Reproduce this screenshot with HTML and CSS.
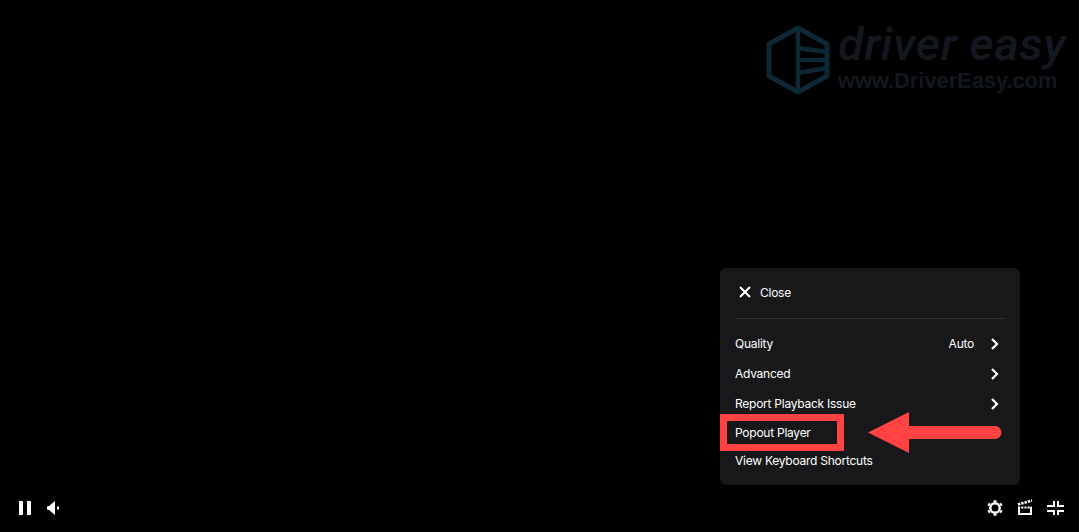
FILE: index.html
```html
<!DOCTYPE html>
<html lang="en">

<head>
    <meta charset="UTF-8">
    <title>Player</title>
    <link rel="stylesheet" href="styles.css">
</head>

<body>
    <div class="player">
        <div class="watermark">
            <svg class="watermark-logo" width="64" height="70" viewBox="0 0 64 70">
                <path d="M32 3 L61 19 V51 L32 67 L3 51 V19 Z" fill="none" stroke="#0d2735" stroke-width="5" stroke-linejoin="round" />
                <path d="M32 3 V67 M32 23 L61 27 M32 35 H61 M32 48 L61 43" fill="none" stroke="#0d2735" stroke-width="4.5" />
            </svg>
            <div class="watermark-text">
                <div class="watermark-name">driver easy</div>
                <div class="watermark-url">www.DriverEasy.com</div>
            </div>
        </div>

        <div class="menu">
            <div class="menu-close">
                <svg width="14" height="14" viewBox="0 0 14 14">
                    <path d="M2 2 L12 12 M12 2 L2 12" stroke="#fff" stroke-width="2" fill="none" />
                </svg>
                <span>Close</span>
            </div>
            <div class="menu-rows">
                <div class="menu-row">
                    <span class="menu-label">Quality</span>
                    <span class="menu-value">Auto</span>
                    <svg class="chevron" width="10" height="14" viewBox="0 0 10 14">
                        <path d="M2 2 L7 7 L2 12" stroke="#fff" stroke-width="2.2" fill="none" />
                    </svg>
                </div>
                <div class="menu-row">
                    <span class="menu-label">Advanced</span>
                    <svg class="chevron" width="10" height="14" viewBox="0 0 10 14">
                        <path d="M2 2 L7 7 L2 12" stroke="#fff" stroke-width="2.2" fill="none" />
                    </svg>
                </div>
                <div class="menu-row">
                    <span class="menu-label">Report Playback Issue</span>
                    <svg class="chevron" width="10" height="14" viewBox="0 0 10 14">
                        <path d="M2 2 L7 7 L2 12" stroke="#fff" stroke-width="2.2" fill="none" />
                    </svg>
                </div>
                <div class="menu-row">
                    <span class="menu-label">Popout Player</span>
                </div>
                <div class="menu-row">
                    <span class="menu-label">View Keyboard Shortcuts</span>
                </div>
            </div>
        </div>

        <div class="callout-box"></div>
        <svg class="callout-arrow" width="136" height="42" viewBox="0 0 136 42">
            <path d="M1 20.5 L42 0 V14 H128 A6.5 6.5 0 0 1 128 27 H42 V41 Z" fill="#ff4242" />
        </svg>
    </div>

    <div class="controls">
        <div class="controls-group">
            <svg width="20" height="20" viewBox="0 0 20 20">
                <path d="M5 4 H9 V18 H5 Z M13 4 H17 V18 H13 Z" fill="#fff" />
            </svg>
            <svg width="20" height="20" viewBox="0 0 20 20">
                <path d="M3 9.5 L5 9 L11 4 V18 L5 13 L3 12.5 Z M13 9.5 H15 V12.5 H13 Z" fill="#fff" />
            </svg>
        </div>
        <div class="controls-group">
            <svg width="20" height="20" viewBox="0 0 20 20">
                <circle cx="10" cy="11" r="4.7" fill="none" stroke="#fff" stroke-width="2.4" />
                <path d="M10 3.2 V5 M10 17 V18.8 M3.2 7 L4.8 8 M15.2 14 L16.8 15 M3.2 15 L4.8 14 M15.2 8 L16.8 7" stroke="#fff" stroke-width="3" />
            </svg>
            <svg width="20" height="20" viewBox="0 0 20 20">
                <path d="M4 10 V17 H16 V10" fill="none" stroke="#fff" stroke-width="2" />
                <path d="M3 7.5 L17 3.5" stroke="#fff" stroke-width="2.6" stroke-dasharray="2.4 1" />
                <path d="M3 10.5 H17" stroke="#fff" stroke-width="2" stroke-dasharray="2.2 1" />
            </svg>
            <svg width="20" height="20" viewBox="0 0 20 20">
                <path d="M2 9 H9 V4 M13 4 V9 H19 M2 14 H9 V18 M19 14 H13 V18" fill="none" stroke="#fff" stroke-width="2" />
            </svg>
        </div>
    </div>
</body>

</html>
```

FILE: styles.css
```css
html,
body {
    margin: 0;
    height: 100%;
}

body {
    display: flex;
    flex-direction: column;
    overflow: hidden;
    background-color: #000;
    color: #fff;
    font-family: Inter, Arial, sans-serif;
    font-size: 12px;
    letter-spacing: -0.25px;
}

.player {
    position: relative;
    flex: 1;
}

.watermark {
    position: absolute;
    top: 25px;
    left: 766px;
    display: flex;
    gap: 8px;
}

.watermark-text {
    display: flex;
    flex-direction: column;
}

.watermark-name {
    height: 46px;
    color: #13181e;
    font-family: Roboto, sans-serif;
    font-size: 47px;
    font-style: italic;
    font-weight: 500;
    letter-spacing: 0.5px;
    line-height: 38px;
    white-space: nowrap;
}

.watermark-url {
    color: #13181e;
    font-family: "Liberation Sans", Arial, sans-serif;
    font-size: 21.8px;
    font-weight: bold;
    letter-spacing: 0;
    line-height: 20px;
    white-space: nowrap;
}

.menu {
    position: absolute;
    top: 268px;
    left: 720px;
    box-sizing: border-box;
    width: 300px;
    height: 217px;
    padding: 10px 15px;
    border-radius: 6px;
    background-color: #18181b;
}

.menu-close {
    display: flex;
    align-items: center;
    gap: 8px;
    height: 28px;
    padding: 0 3px;
    padding-bottom: 12px;
    border-bottom: 1px solid #323236;
}

.menu-rows {
    padding-top: 10.2px;
}

.menu-row {
    display: flex;
    align-items: center;
    height: 29.55px;
}

.menu-row:last-child {
    height: 27px;
}

.menu-label {
    flex: 1;
}

.menu-value {
    margin-right: 16px;
}

.chevron {
    margin-top: 1px;
    margin-right: 5px;
}

.callout-box {
    position: absolute;
    top: 414px;
    left: 720px;
    box-sizing: border-box;
    width: 124px;
    height: 37px;
    border: 7px solid #ff4242;
}

.callout-arrow {
    position: absolute;
    top: 412px;
    left: 867px;
}

.controls {
    display: flex;
    justify-content: space-between;
    align-items: center;
    height: 50px;
    padding: 0 14px;
}

.controls-group {
    display: flex;
    gap: 10px;
}
```
